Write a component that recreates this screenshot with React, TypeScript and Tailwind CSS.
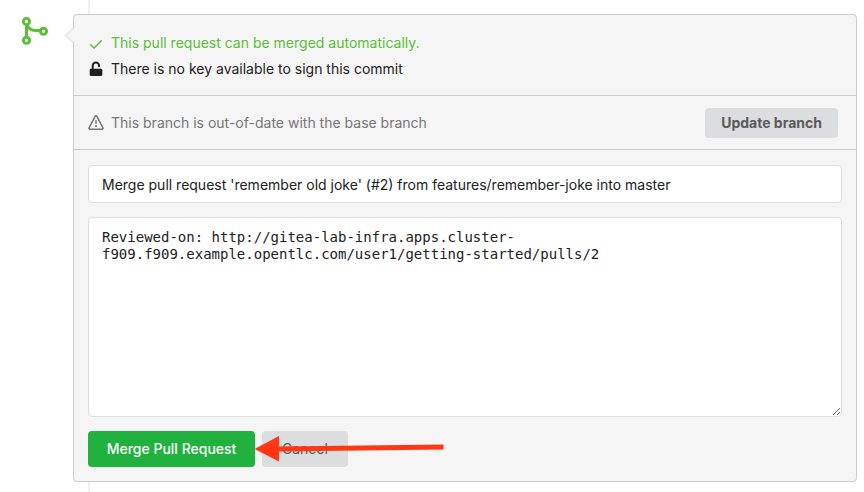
function MergeIcon() {
  return (
    <svg width="28" height="30" viewBox="0 0 28 30" fill="none" stroke="#5bbd38" aria-hidden="true">
      <path d="M5.5 9v12.500M5.5 8c1.500 4.500 5 6.500 9 6.500h4.500" strokeWidth="3" />
      <circle cx="5.500" cy="5.500" r="3.100" strokeWidth="2.900" />
      <circle cx="5.500" cy="24.300" r="3.100" strokeWidth="2.900" />
      <circle cx="22.500" cy="15.300" r="3.100" strokeWidth="2.900" />
    </svg>
  );
}

function CheckIcon() {
  return (
    <svg className="shrink-0" width="16" height="16" viewBox="0 0 16 16" fill="currentColor" aria-hidden="true">
      <path d="M13.900 5.220a.75.75 0 0 1 0 1.060l-7.370 7.250a.75.75 0 0 1-1.060 0L2.100 10.280a.75.75 0 0 1 1.060-1.060L6 11.940l6.840-6.720a.75.75 0 0 1 1.060 0z" />
    </svg>
  );
}

function UnlockIcon() {
  return (
    <svg className="shrink-0" width="16" height="16" viewBox="0 0 16 16" aria-hidden="true">
      <rect x="1.700" y="7.700" width="12.600" height="7.200" rx="1.200" fill="#212121" />
      <path d="M4.700 8.500V4.800a3.200 3.200 0 0 1 6.400 0v0.400" fill="none" stroke="#212121" strokeWidth="2" strokeLinecap="round" />
    </svg>
  );
}

function AlertIcon() {
  return (
    <svg className="shrink-0" width="16" height="16" viewBox="0 0 16 16" fill="currentColor" aria-hidden="true">
      <path fillRule="evenodd" d="M8.220 1.754a.25.25 0 0 0-.44 0L1.698 13.132a.25.25 0 0 0 .22.368h12.164a.25.25 0 0 0 .22-.368L8.220 1.754zm-1.763-.707c.659-1.234 2.427-1.234 3.086 0l6.082 11.378A1.750 1.750 0 0 1 14.082 15H1.918a1.750 1.750 0 0 1-1.543-2.575L6.457 1.047zM9 11a1 1 0 1 1-2 0 1 1 0 0 1 2 0zm-.25-5.250a.75.75 0 0 0-1.500 0v2.500a.75.75 0 0 0 1.500 0v-2.500z" />
    </svg>
  );
}

export default function App() {
  return (
    <main className="bg-white font-['Inter','Liberation_Sans',sans-serif] text-sm leading-5 text-[#212121]">
      <div className="ml-[88px] h-3.5 w-0.5 bg-[#eeeeee]" />
      <div className="flex pr-[7px]">
        <div className="w-[73px] shrink-0 pl-[21px] pt-0.5">
          <MergeIcon />
        </div>
        <section className="relative min-w-0 flex-1 rounded border border-[#cccccd] bg-[#f5f5f5]">
          <svg className="absolute top-3 -left-[9px]" width="9" height="18" viewBox="0 0 9 18" aria-hidden="true">
            <path d="M9 0.500L0.700 8.500L9 16.500" fill="#f5f5f5" stroke="#d4d4d5" />
          </svg>
          <div className="flex flex-col gap-1.5 border-b border-[#cccccd] px-3.5 pt-[18px] pb-4">
            <p className="flex items-center gap-[7px] text-[#5bbd38]">
              <CheckIcon />
              This pull request can be merged automatically.
            </p>
            <p className="flex items-center gap-[7px]">
              <UnlockIcon />
              There is no key available to sign this commit
            </p>
          </div>
          <div className="flex items-center justify-between border-b border-[#cccccd] pt-3 pr-[18px] pb-[11px] pl-3.5">
            <p className="flex items-center gap-[7px] text-[#767676]">
              <AlertIcon />
              This branch is out-of-date with the base branch
            </p>
            <button type="button" className="h-[30px] rounded bg-[#dcddde] px-4 font-bold text-[#5a5a5a]">
              Update branch
            </button>
          </div>
          <form className="flex flex-col gap-3.5 px-3.5 pt-[15px] pb-3.5" onSubmit={(e) => e.preventDefault()}>
            <input
              aria-label="Merge title"
              className="h-[38px] w-full rounded border border-[#dededf] bg-white px-[13px] outline-none"
              defaultValue="Merge pull request 'remember old joke' (#2) from features/remember-joke into master"
            />
            <textarea
              aria-label="Merge message"
              className="block h-[200px] w-full resize-y rounded border border-[#dededf] bg-white px-[13px] py-[11px] font-['DejaVu_Sans_Mono',monospace] leading-[17px] outline-none"
              defaultValue={"Reviewed-on: http://gitea-lab-infra.apps.cluster-f909.f909.example.opentlc.com/user1/getting-started/pulls/2"}
            />
            <div className="relative flex gap-[7px]">
              <button type="submit" className="h-9 w-[167px] rounded bg-[#21b13f] font-medium text-white">
                Merge Pull Request
              </button>
              <button type="button" className="h-9 rounded bg-[#dcddde] px-5 text-[#5a5a5a]">
                Cancel
              </button>
              <svg className="absolute top-0 left-[166px]" width="192" height="36" viewBox="0 0 192 36" aria-hidden="true">
                <path d="M0.500 18L25 5V15.500L189.500 13.500V18.500L25 20.500V30.500Z" fill="#ff3714" />
              </svg>
            </div>
          </form>
        </section>
      </div>
      <div className="ml-[88px] h-2.5 w-0.5 bg-[#eeeeee]" />
    </main>
  );
}
